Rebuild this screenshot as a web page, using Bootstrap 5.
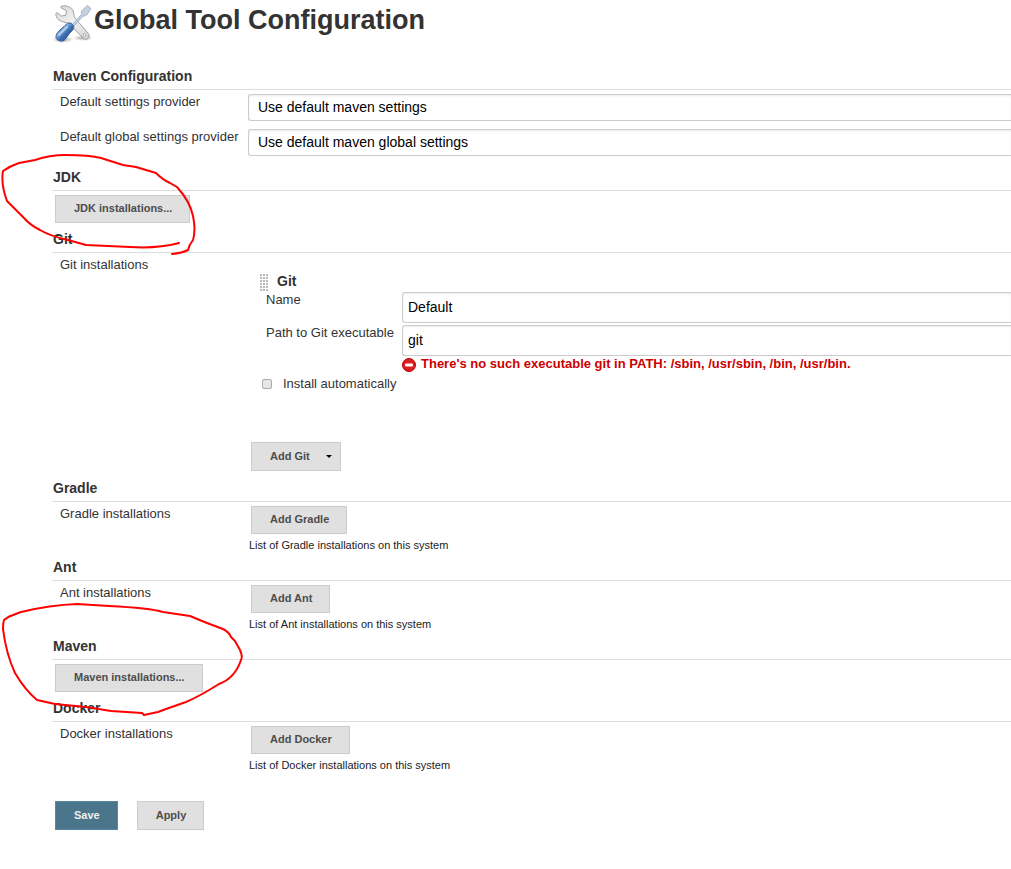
<!DOCTYPE html>
<html lang="en">
<head>
<meta charset="utf-8">
<meta name="viewport" content="width=device-width, initial-scale=1">
<title>Global Tool Configuration</title>
<link rel="stylesheet" href="https://cdn.jsdelivr.net/npm/bootstrap@5.3.0/dist/css/bootstrap.min.css">
<style>
body{font-family:"Liberation Sans",Arial,sans-serif;font-size:13px;line-height:18px;color:#333;background:#fff}
.config-page{padding:4px 0 32px 52px}
.page-title{font-size:27px;line-height:32px;font-weight:700;margin:0}
.title-bar{height:62px}
.section-title{font-size:14px;line-height:21px;font-weight:700;margin:0;padding:0 0 2px 1px;border-bottom:1px solid #ddd}
.section-body{padding:4px 0 6px}
.field-name{width:196px;flex:none;padding-left:8px;white-space:nowrap;line-height:16px}
.field-rows{gap:8px;padding-bottom:11px}
.form-select,.form-control{font-size:14px;line-height:19px;color:#000;border:1px solid #ccc;border-right:0;border-radius:3px 0 0 3px;box-shadow:inset 0 1px 2px #00000014;background-color:#fff}
.form-select{background-image:none;padding:3px 9px;height:27px}
.form-control{padding:0 5px 2px;height:31px}
.btn{font-size:11px;line-height:16px;font-weight:700;border-radius:0;padding:5px 17px 6px 18px;--bs-btn-color:#4d4d4d;--bs-btn-bg:#e0e0e0;--bs-btn-border-color:#ccc;--bs-btn-hover-color:#333;--bs-btn-hover-bg:#d5d5d5;--bs-btn-hover-border-color:#bbb;white-space:nowrap}
.btn-tool{margin-left:3px;height:28px;padding-top:4px}
.btn-tall{height:29px;padding-top:5px}
.btn-save{--bs-btn-color:#eee;--bs-btn-bg:#4b758b;--bs-btn-border-color:#5788a1;--bs-btn-hover-color:#fff;--bs-btn-hover-bg:#3f6478;--bs-btn-hover-border-color:#3f6478}
.btn-menu{padding-right:8px}
.btn-menu::after{margin-left:16px;border-top:3px solid #000;border-right:3px solid transparent;border-left:3px solid transparent;vertical-align:2px}
.hint{font-size:11px;line-height:16px;padding:3px 0 0 1px;color:#222}
.with-hint{padding-bottom:4px}
.git-body{padding-bottom:7px}
.git-entry{padding:17px 0 49px}
.git-head{padding-left:12px;gap:8px;height:18px;font-size:14px;line-height:15px}
.grip{width:9px;height:17px;background-image:radial-gradient(circle at 1px 1px,#bbb 1px,transparent 1px);background-size:3px 3px}
.git-label{width:154px;flex:none;padding-left:18px;white-space:nowrap;line-height:16px}
.git-fields{gap:2px}
.error-line{color:#c00;font-weight:700;padding-left:154px;gap:5px;height:16px;line-height:15px}
.auto-row{padding:3px 0 0 14px;gap:11px}
.auto-row .form-check-input{width:10px;height:10px;margin:0;border:1px solid #aaa;border-radius:2px;background-color:#e6e6e6}
.ink{position:absolute;left:-52px;pointer-events:none;z-index:2;fill:none;stroke:#f00;stroke-width:2;stroke-linecap:round;stroke-linejoin:round}
.ink-jdk{top:-17px}
.ink-maven{top:-41px}
.form-actions{padding:24px 0 0 3px;gap:19px}
</style>
</head>
<body>
<main class="config-page overflow-hidden">
<header class="title-bar d-flex align-items-start">
<svg width="42" height="40" viewBox="0 0 42 40" aria-hidden="true">
<defs>
<linearGradient id="steel" x1="0" y1="0" x2="1" y2="1"><stop offset="0" stop-color="#d4d4d4"/><stop offset=".5" stop-color="#f2f2f2"/><stop offset="1" stop-color="#d0d0d0"/></linearGradient>
<linearGradient id="handle" x1="0" y1="0" x2="1" y2="1"><stop offset="0" stop-color="#3f74ba"/><stop offset=".38" stop-color="#86aede"/><stop offset=".55" stop-color="#3a6db2"/><stop offset="1" stop-color="#234b87"/></linearGradient>
<radialGradient id="shade"><stop offset="0" stop-color="#000" stop-opacity=".35"/><stop offset="1" stop-color="#000" stop-opacity="0"/></radialGradient>
</defs>
<ellipse cx="11" cy="35.500" rx="11" ry="3.500" fill="url(#shade)"/><ellipse cx="31" cy="34" rx="10" ry="3" fill="url(#shade)"/>
<path d="M9 2.500C14 .5 20 3 21.500 8c.6 2.500 0 4 1.500 6l13 15c3.500 4-1.500 8.500-5 5L17.500 20c-1.500-1.500-4-1.500-6-2C6.500 17 3.500 13.500 4 9.500c0-1 1-1 2-.2L9.500 12l4-.7 1.200-4.300L9.500 4c-1-.6-1-1.200-.5-1.500z" fill="url(#steel)" stroke="#a2a2a2"/>
<circle cx="32.500" cy="31" r="1.400" fill="#fff" stroke="#aaa"/>
<path d="M19 22l10.500-11.500c-.7-2 0-3.500 1-4.500L35.500 1.500 39 4.500 35.500 10c-1 1.500-2.500 2.200-4.500 2L21 23.500z" fill="#c3d0de" stroke="#9aabbd" stroke-width=".8"/>
<path d="M17 19c3-.5 5.500 3 4.500 5.500-.7 2-2.500 3-4 5L13 35.500c-2 3-8.500 1.500-9-2-.3-2.500 1-4.500 3-6.500l5-4.500c1.500-1.500 3-3.200 5-3.500z" fill="url(#handle)" stroke="#31619f"/>
<path d="M7 31l8-8" stroke="#b4cdec" stroke-width="1.800" stroke-linecap="round"/>
</svg>
<h1 class="page-title">Global Tool Configuration</h1>
</header>
<form>
<section>
<h2 class="section-title">Maven Configuration</h2>
<div class="section-body field-rows d-flex flex-column">
<div class="d-flex"><label class="field-name" for="settings">Default settings provider</label><select class="form-select" id="settings"><option>Use default maven settings</option></select></div>
<div class="d-flex"><label class="field-name" for="global">Default global settings provider</label><select class="form-select" id="global"><option>Use default maven global settings</option></select></div>
</div>
</section>
<section class="position-relative">
<h2 class="section-title">JDK</h2>
<div class="section-body d-flex"><button type="button" class="btn btn-tool">JDK installations...</button></div>
<svg class="ink ink-jdk" width="200" height="110" viewBox="0 150 200 110" aria-hidden="true"><path d="M179 243C164 247 145 248 130 247L86 245L68 240Q50 236 40 230Q30 225 24 218L7 201C4 193 1 182 3 171Q10 166 19 163L35 160Q50 155 65 155Q90 155 101 158L123 165L136 167L156 173Q163 180 170 183L177 187C187 198 191 206 193 216Q196 230 193 240Q189 245 188 250Q182 253 172 254"/></svg>
</section>
<section>
<h2 class="section-title">Git</h2>
<div class="section-body git-body d-flex">
<div class="field-name">Git installations</div>
<div class="flex-grow-1">
<div class="git-entry">
<div class="git-head d-flex fw-bold"><span class="grip"></span><span>Git</span></div>
<div class="git-fields d-flex flex-column">
<div class="d-flex"><label class="git-label" for="gname">Name</label><input class="form-control" id="gname" type="text" value="Default"></div>
<div class="d-flex"><label class="git-label" for="gpath">Path to Git executable</label><input class="form-control" id="gpath" type="text" value="git"></div>
</div>
<div class="error-line d-flex"><svg width="14" height="16" viewBox="0 0 14 16" aria-hidden="true"><circle cx="7" cy="9" r="6.500" fill="#d81e1e" stroke="#b00"/><rect x="3" y="7.500" width="8" height="3" rx="1" fill="#fff"/></svg><span>There's no such executable git in PATH: /sbin, /usr/sbin, /bin, /usr/bin.</span></div>
<div class="auto-row d-flex align-items-center"><input class="form-check-input" type="checkbox" id="auto"><label for="auto">Install automatically</label></div>
</div>
<button type="button" class="btn btn-tool btn-tall btn-menu dropdown-toggle d-block" data-bs-toggle="dropdown">Add Git</button>
</div>
</div>
</section>
<section>
<h2 class="section-title">Gradle</h2>
<div class="section-body with-hint d-flex"><div class="field-name">Gradle installations</div><div><button type="button" class="btn btn-tool d-block">Add Gradle</button><div class="hint">List of Gradle installations on this system</div></div></div>
</section>
<section>
<h2 class="section-title">Ant</h2>
<div class="section-body with-hint d-flex"><div class="field-name">Ant installations</div><div><button type="button" class="btn btn-tool d-block">Add Ant</button><div class="hint">List of Ant installations on this system</div></div></div>
</section>
<section class="position-relative">
<h2 class="section-title">Maven</h2>
<div class="section-body d-flex"><button type="button" class="btn btn-tool">Maven installations...</button></div>
<svg class="ink ink-maven" width="250" height="125" viewBox="0 595 250 125" aria-hidden="true"><path d="M4 620Q9 616 13 615L21 612Q50 605 77 604L109 606Q150 608 163 612L190 616L207 623L223 629Q229 632 231 637L235 641L240 650Q243 657 241 660C237 672 230 680 219 684Q200 696 186 702L166 709L158 712L144 715L142 713L111 711L86 707L55 704L37 700Q25 690 15 673C8 658 5 645 3 629Q3 623 4 620"/></svg>
</section>
<section>
<h2 class="section-title">Docker</h2>
<div class="section-body with-hint d-flex"><div class="field-name">Docker installations</div><div><button type="button" class="btn btn-tool d-block">Add Docker</button><div class="hint">List of Docker installations on this system</div></div></div>
</section>
<div class="form-actions d-flex"><button type="submit" class="btn btn-tall btn-save">Save</button><button type="button" class="btn btn-tall">Apply</button></div>
</form>
</main>
<script src="https://cdn.jsdelivr.net/npm/bootstrap@5.3.0/dist/js/bootstrap.bundle.min.js"></script>
</body>
</html>
